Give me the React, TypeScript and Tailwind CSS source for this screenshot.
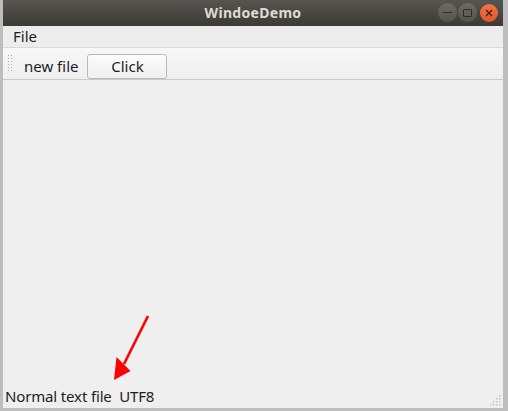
import React from "react";

const font = { fontFamily: '"Noto Sans", "Open Sans", sans-serif' };

function Grip() {
  const dots = [];
  for (let r = 0; r < 6; r++) {
    for (let c = 0; c < 2; c++) {
      dots.push(<rect key={`${r}-${c}`} x={c * 3} y={r * 3} width={1} height={1} fill="#b0b0b0" />);
    }
  }
  return (
    <svg width="5" height="18" className="shrink-0 mt-[7px]">
      {dots}
    </svg>
  );
}

function SizeGrip() {
  const pts: [number, number][] = [
    [9, 0], [6, 3], [9, 3], [3, 6], [6, 6], [9, 6], [0, 9], [3, 9], [6, 9], [9, 9],
  ];
  return (
    <svg width="11" height="11" className="absolute right-[2px] bottom-[2px]">
      {pts.map(([x, y], i) => (
        <rect key={i} x={x} y={y} width={1.5} height={1.5} fill="#c4c4c4" />
      ))}
    </svg>
  );
}

export default function App() {
  return (
    <div className="w-[508px] h-[411px] bg-[#bdbdbd] pl-[3px] pr-[5px] pb-[3px] relative overflow-hidden" style={font}>
      <div className="w-[500px] h-[408px] flex flex-col bg-[#efefef] relative">
        {/* Title bar */}
        <div className="h-[26px] shrink-0 bg-gradient-to-b from-[#57554f] to-[#3b3a36] relative flex items-center justify-center">
          <span className="text-[14px] font-bold text-[#dfdbd2] tracking-[0.3px] leading-none">WindoeDemo</span>
          <div className="absolute right-[5px] top-[3px] flex items-center gap-[1px]">
            <div className="w-[19px] h-[19px] rounded-full bg-gradient-to-b from-[#6d6b66] to-[#55534e] flex items-center justify-center">
              <div className="w-[9px] h-[1.5px] bg-[#2d2c29]" />
            </div>
            <div className="w-[19px] h-[19px] rounded-full bg-gradient-to-b from-[#6d6b66] to-[#55534e] flex items-center justify-center">
              <div className="w-[9px] h-[8px] border-[1.5px] border-[#2d2c29] rounded-[1px]" />
            </div>
            <div className="w-[18px] h-[18px] ml-[2px] rounded-full bg-gradient-to-b from-[#f37447] to-[#e0542b] flex items-center justify-center">
              <svg width="8" height="8" viewBox="0 0 8 8">
                <path d="M1 1 L7 7 M7 1 L1 7" stroke="#3a2318" strokeWidth="1.4" />
              </svg>
            </div>
          </div>
        </div>
        {/* Menu bar */}
        <div className="h-[22px] shrink-0 bg-[#ededed] border-b border-[#d9d9d9] flex items-center pl-[10px]">
          <span className="text-[15px] text-[#1d1d1d] leading-none">File</span>
        </div>
        {/* Toolbar */}
        <div className="h-[32px] shrink-0 bg-gradient-to-b from-[#f7f7f7] to-[#efefef] border-b border-[#c8c8c8] flex items-start pl-[5px]">
          <Grip />
          <span className="text-[15px] text-[#1d1d1d] ml-[11px] mt-[11px] leading-none">new file</span>
          <div className="ml-[9px] mt-[6px] w-[80px] h-[25px] rounded-[3px] border border-[#b9b9b9] bg-gradient-to-b from-[#fbfbfb] to-[#f0f0f0] flex items-center justify-center">
            <span className="text-[15px] text-[#1d1d1d] leading-none">Click</span>
          </div>
        </div>
        {/* Content */}
        <div className="flex-1" />
        {/* Status bar */}
        <div className="h-[24px] shrink-0 flex items-center pl-[2px] relative">
          <span className="text-[15px] text-[#1d1d1d] leading-none whitespace-pre tracking-[-0.15px]">Normal text file  UTF8</span>
          <SizeGrip />
        </div>
      </div>
      {/* Red arrow overlay */}
      <svg className="absolute left-0 top-0" width="508" height="411">
        <line x1="148" y1="316" x2="124" y2="364" stroke="#ff0000" strokeWidth="2.6" />
        <polygon points="114,380 116.5,357 130.5,371" fill="#ff0000" />
      </svg>
    </div>
  );
}
